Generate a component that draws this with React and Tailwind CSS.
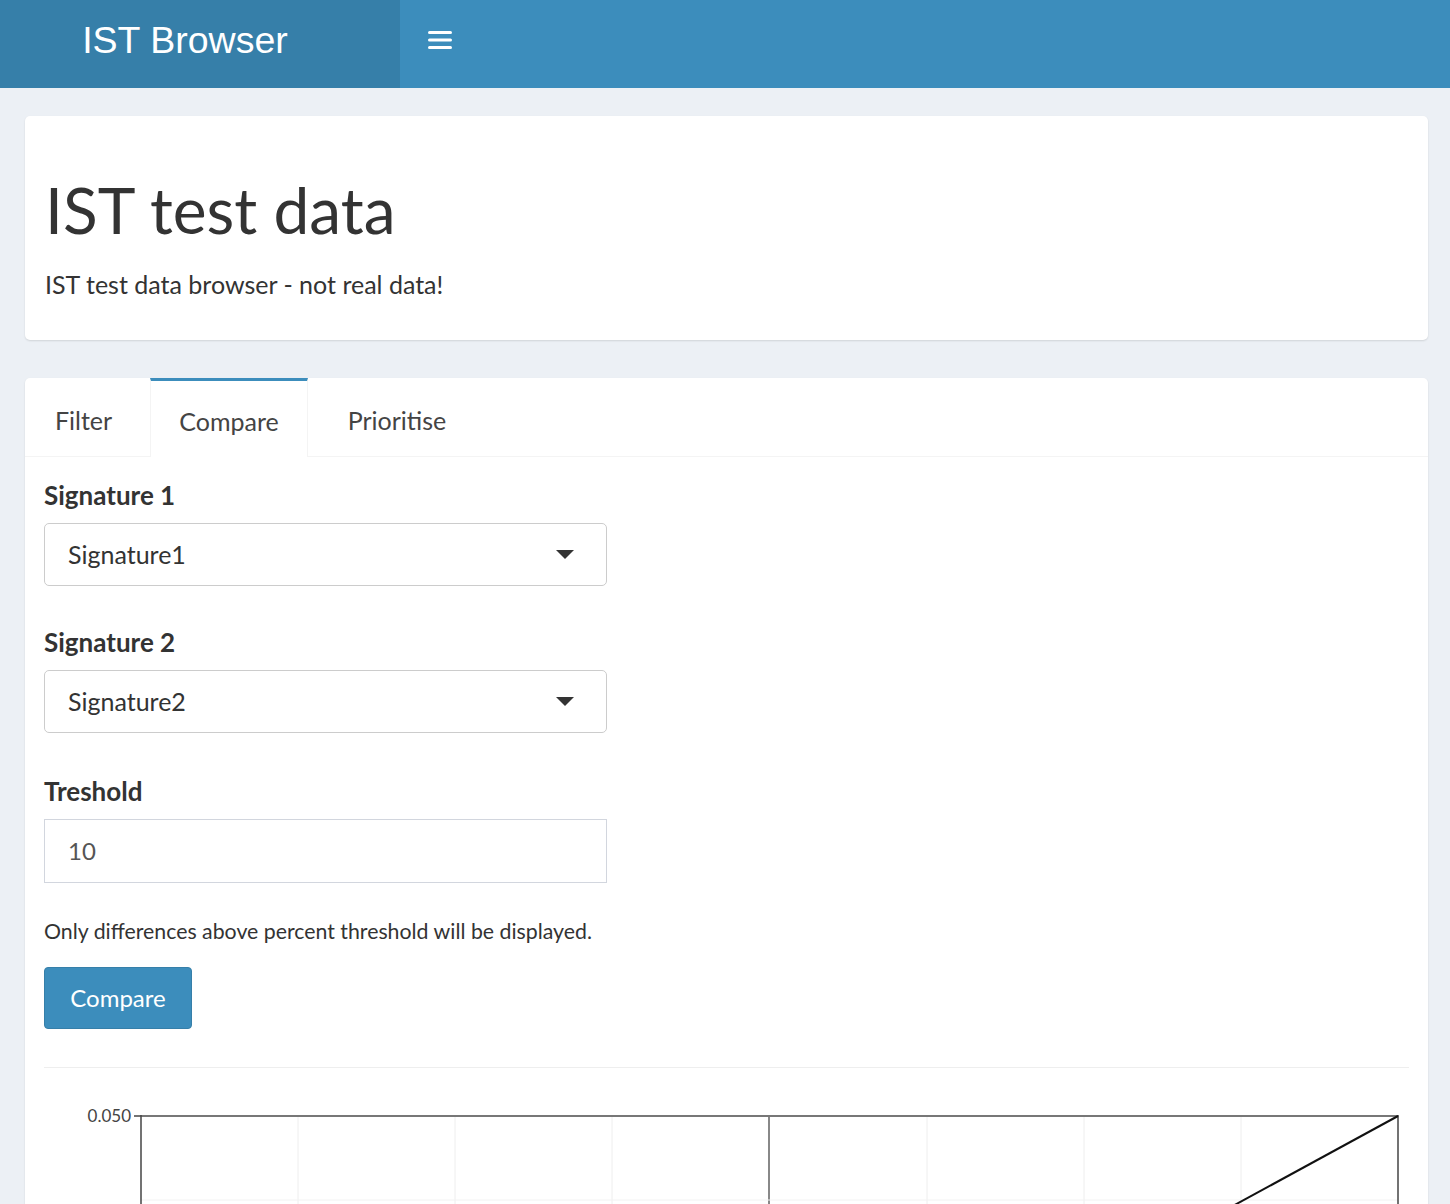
import React from 'react';

const FONT = { fontFamily: 'Lato, "Open Sans", sans-serif' };

function Header() {
  return (
    <header className="flex h-[88px] bg-[#3c8dbc]">
      <div className="flex w-[400px] items-center justify-center bg-[#367fa9] pr-[30px] pb-[8px]">
        <span
          className="text-[37.5px] text-white"
          style={{ fontFamily: '"Liberation Sans", Arial, sans-serif' }}
        >
          IST Browser
        </span>
      </div>
      <button className="flex w-[80px] items-center justify-center pb-[8px]">
        <svg width="24" height="20" viewBox="0 0 24 20">
          <rect x="0" y="1" width="24" height="3" rx="1.5" fill="#fff" />
          <rect x="0" y="8.5" width="24" height="3" rx="1.5" fill="#fff" />
          <rect x="0" y="16" width="24" height="3" rx="1.5" fill="#fff" />
        </svg>
      </button>
    </header>
  );
}

function SelectBox({ value }) {
  return (
    <div className="flex h-[63px] w-[563px] items-center justify-between rounded-[5px] border border-[#cccccc] bg-white pl-[23px] pr-[32px]">
      <span className="text-[25px] text-[#333]">{value}</span>
      <svg width="18" height="10" viewBox="0 0 18 10">
        <path d="M0 0 L18 0 L9 9 Z" fill="#333" />
      </svg>
    </div>
  );
}

function Chart() {
  const xs = [141, 298, 455, 612, 769, 927, 1084, 1241, 1398].map((x) => x - 44);
  return (
    <svg width="1364" height="360" viewBox="0 0 1364 360" className="block">
      {xs.slice(1, -1).map((x, i) => (
        <line
          key={x}
          x1={x}
          y1="48"
          x2={x}
          y2="360"
          stroke={i === 3 ? '#888' : '#eeeeee'}
          strokeWidth={i === 3 ? 2 : 1}
        />
      ))}
      <line x1="97" y1="132" x2="1354" y2="132" stroke="#f2f2f2" strokeWidth="1" />
      <line x1="97" y1="48" x2="1354" y2="48" stroke="#777" strokeWidth="2" />
      <line x1="97" y1="47" x2="97" y2="360" stroke="#444" strokeWidth="1.5" />
      <line x1="1354" y1="47" x2="1354" y2="360" stroke="#444" strokeWidth="1.5" />
      <line x1="90" y1="48" x2="97" y2="48" stroke="#444" strokeWidth="1.5" />
      <text x="87" y="54" textAnchor="end" fontSize="17" fill="#444" style={FONT}>
        0.050
      </text>
      <line x1="1354" y1="48" x2="1020" y2="230" stroke="#111" strokeWidth="2" />
    </svg>
  );
}

export default function App() {
  return (
    <div className="min-h-screen bg-[#ecf0f5]" style={FONT}>
      <Header />
      <main className="flex flex-col gap-[38px] pl-[25px] pr-[22px] pt-[28px] pb-[40px]">
        <section className="rounded-[5px] bg-white px-[20px] pt-[54px] pb-[38px] shadow-[0_1px_2px_rgba(0,0,0,0.12)]">
          <h1 className="text-[64px] leading-[80px] text-[#333]">IST test data</h1>
          <p className="mt-[16px] text-[25px] leading-[36px] text-[#333]">IST test data browser - not real data!</p>
        </section>

        <section className="rounded-[5px] bg-white shadow-[0_1px_2px_rgba(0,0,0,0.12)]">
          <nav className="flex h-[79px] border-b border-[#f4f4f4]">
            <div className="flex w-[125px] items-center justify-center pt-[8px] pr-[8px] text-[25px] text-[#444]">
              Filter
            </div>
            <div className="-mb-px flex w-[158px] items-center justify-center border-x border-t-[3px] border-[#f4f4f4] border-t-[#3c8dbc] bg-white pt-[5px] text-[25px] text-[#444]">
              Compare
            </div>
            <div className="flex w-[178px] items-center justify-center pt-[8px] text-[25px] text-[#444]">
              Prioritise
            </div>
          </nav>

          <div className="px-[19px] pt-[20px]">
            <label className="block text-[26px] leading-[36px] font-bold text-[#333]">Signature 1</label>
            <div className="mt-[10px]">
              <SelectBox value="Signature1" />
            </div>

            <label className="mt-[38px] block text-[26px] leading-[36px] font-bold text-[#333]">Signature 2</label>
            <div className="mt-[10px]">
              <SelectBox value="Signature2" />
            </div>

            <label className="mt-[40px] block text-[26px] leading-[36px] font-bold text-[#333]">Treshold</label>
            <div className="mt-[10px] flex h-[64px] w-[563px] items-center border border-[#d2d6de] pl-[23px] text-[24px] text-[#555]">
              10
            </div>

            <p className="mt-[32px] text-[21.3px] leading-[32px] text-[#333]">
              Only differences above percent threshold will be displayed.
            </p>

            <button className="mt-[20px] h-[62px] w-[148px] rounded-[4px] border border-[#367fa9] bg-[#3c8dbc] text-[24px] text-white">
              Compare
            </button>

            <div className="mt-[38px] border-t border-[#eeeeee]" />

            <Chart />
          </div>
        </section>
      </main>
    </div>
  );
}
